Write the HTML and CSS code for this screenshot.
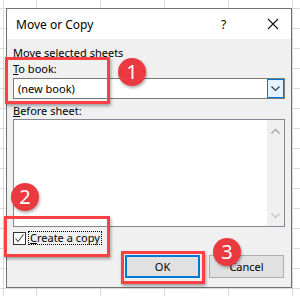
FILE: index.html
```html
<!DOCTYPE html>
<html lang="en">
<head>
<meta charset="UTF-8">
<meta name="viewport" content="width=device-width, initial-scale=1.0">
<title>Move or Copy</title>
<link rel="stylesheet" href="styles.css">
</head>
<body>
<div class="dialog">
  <div class="titlebar">
    <span class="title">Move or Copy</span>
    <span class="help">?</span>
    <span class="close">
      <svg width="12" height="12" viewBox="0 0 12 12"><path d="M1 1L11 11M11 1L1 11" stroke="#111" stroke-width="1.1" fill="none"/></svg>
    </span>
  </div>
  <div class="content">
    <div class="label first">Move selected sheets</div>
    <div class="label"><u>T</u>o book:</div>
    <div class="combo">
      <span class="combo-text">(new book)</span>
      <span class="combo-btn">
        <svg width="9" height="6" viewBox="0 0 9 6"><path d="M0.5 0.5L4.5 4.5L8.5 0.5" stroke="#333" stroke-width="1.1" fill="none"/></svg>
      </span>
    </div>
    <div class="label"><u>B</u>efore sheet:</div>
    <div class="listbox">
      <div class="list-items"></div>
      <div class="scrollbar">
        <svg width="9" height="6" viewBox="0 0 9 6"><path d="M0.5 5.5L4.5 1.5L8.5 5.5" stroke="#a8a8a8" stroke-width="1.4" fill="none"/></svg>
        <svg width="9" height="6" viewBox="0 0 9 6"><path d="M0.5 0.5L4.5 4.5L8.5 0.5" stroke="#c8c8c8" stroke-width="1.4" fill="none"/></svg>
      </div>
    </div>
    <div class="check-row">
      <span class="checkbox">
        <svg width="11" height="11" viewBox="0 0 11 11"><path d="M1.5 5.5L4 8.5L9.5 1.5" stroke="#444" stroke-width="1.1" fill="none"/></svg>
      </span>
      <span class="check-label"><u>C</u>reate a copy</span>
    </div>
    <div class="buttons">
      <button class="btn btn-default">OK</button>
      <button class="btn">Cancel</button>
    </div>
  </div>
</div>

<!-- annotations -->
<div class="mark mark-1"></div>
<div class="mark mark-2"></div>
<div class="mark mark-3"></div>
<div class="step step-1">1</div>
<div class="step step-2">2</div>
<div class="step step-3">3</div>
</body>
</html>
```

FILE: styles.css
```css
/* Page with the spreadsheet grid behind the dialog */
body {
  margin: 0;
  width: 300px;
  height: 296px;
  overflow: hidden;
  font-family: "Noto Sans", "Liberation Sans", sans-serif;
  font-size: 11px;
  color: #000;
  background-color: #fff;
  background-image:
    linear-gradient(#dadada, #dadada),
    repeating-linear-gradient(90deg, #dadada 0 1px, transparent 1px 64px),
    repeating-linear-gradient(180deg, #dadada 0 1px, transparent 1px 20px);
  background-size: 1px 100%, 100% 100%, 100% 100%;
  background-position: 3px 0, 36px 0, 0 8px;
  background-repeat: no-repeat, repeat, repeat;
  position: relative;
}

/* Dialog window */
.dialog {
  margin: 8px 0 0 6px;
  width: 284px;
  height: 278px;
  border: 1px solid #707070;
  background: #f0f0f0;
}

.titlebar {
  height: 30px;
  background: #fff;
  display: flex;
  align-items: center;
  padding-left: 9px;
}

.title {
  flex: 1;
  font-size: 12px;
}

.help {
  width: 46px;
  font-size: 12px;
}

.close {
  width: 24px;
  display: flex;
  align-items: center;
}

.content {
  padding: 0 6px;
}

.label {
  height: 16px;
  line-height: 16px;
}

.label.first {
  margin-top: 6px;
}

/* Combo box */
.combo {
  margin-top: 1px;
  height: 19px;
  border: 1px solid #7a7a7a;
  background: #fff;
  display: flex;
  align-items: center;
  margin-bottom: 4px;
}

.combo-text {
  flex: 1;
  padding-left: 4px;
}

.combo-btn {
  width: 15px;
  height: 17px;
  border: 1px solid #0078d7;
  background: #e5f1fb;
  display: flex;
  align-items: center;
  justify-content: center;
}

/* List box */
.listbox {
  height: 106px;
  border: 1px solid #828790;
  background: #fff;
  display: flex;
  margin-bottom: 4px;
}

.list-items {
  flex: 1;
}

.scrollbar {
  width: 17px;
  background: #f0f0f0;
  display: flex;
  flex-direction: column;
  justify-content: space-between;
  align-items: center;
  padding: 8px 0 7px;
}

/* Check box */
.check-row {
  display: flex;
  align-items: center;
  height: 14px;
}

.checkbox {
  width: 11px;
  height: 11px;
  border: 1px solid #333;
  background: #fff;
  display: flex;
}

.check-label {
  margin-left: 3px;
  padding: 0 1px;
  line-height: 12px;
  outline: 1px dotted #000;
}

/* Buttons */
.buttons {
  display: flex;
  justify-content: flex-end;
  gap: 9px;
  margin-top: 10px;
  padding-right: 1px;
}

.btn {
  width: 75px;
  height: 23px;
  font-family: inherit;
  font-size: 11px;
  background: #e1e1e1;
  border: 1px solid #adadad;
  padding: 0;
  color: #000;
}

.btn-default {
  border: 2px solid #0078d7;
}

/* Red annotation boxes and numbered steps */
.mark {
  position: absolute;
  border: 3px solid #fb4143;
  box-shadow: 1px 2px 3px rgba(0, 0, 0, 0.35);
  box-sizing: border-box;
}

.mark-1 { left: 5px; top: 57px; width: 105px; height: 47px; }
.mark-2 { left: 4px; top: 216px; width: 106px; height: 41px; }
.mark-3 { left: 121px; top: 251px; width: 84px; height: 33px; }

.step {
  position: absolute;
  width: 28px;
  height: 28px;
  border-radius: 50%;
  background: #ea3a3f;
  color: #fff;
  font-size: 20px;
  line-height: 28px;
  text-align: center;
  box-shadow: 1px 2px 3px rgba(0, 0, 0, 0.3);
}

.step-1 { left: 118px; top: 58px; }
.step-2 { left: 11px; top: 183px; }
.step-3 { left: 213px; top: 238px; }
```
